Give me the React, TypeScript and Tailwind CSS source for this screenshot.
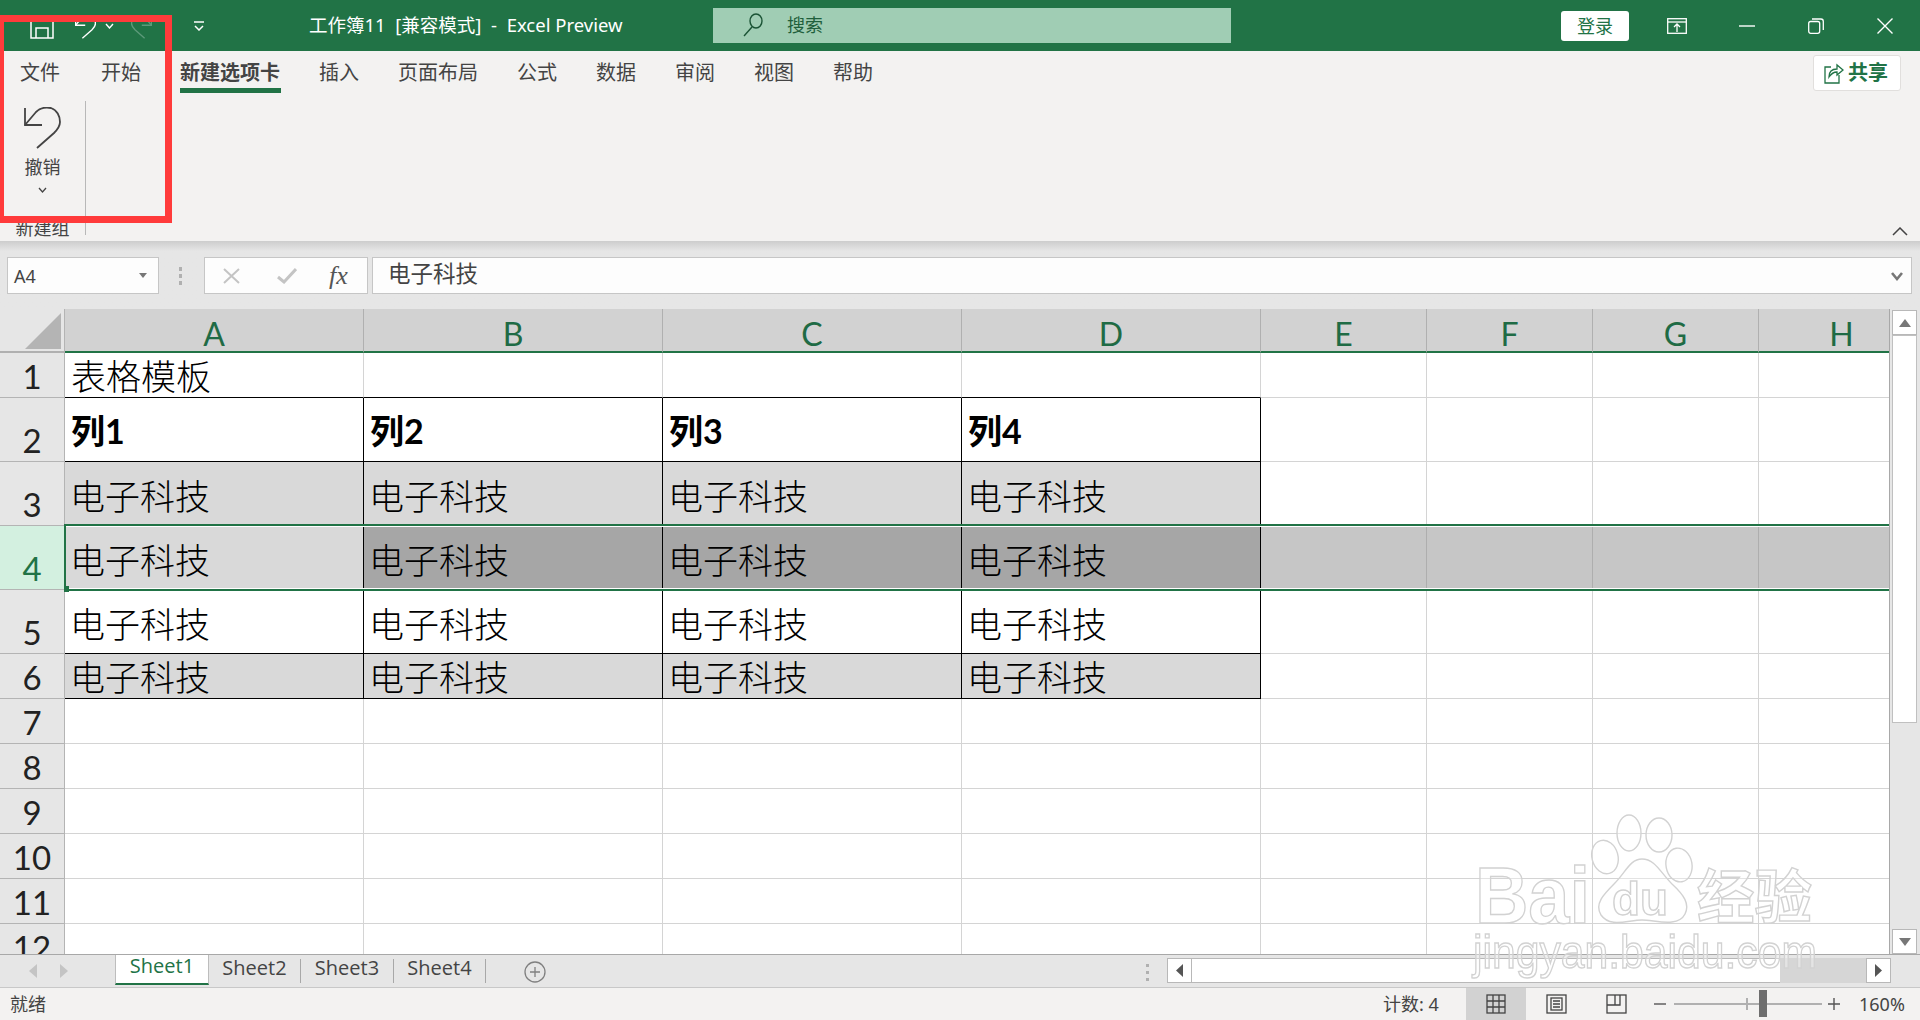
import React from "react"

const COLS = [
  { name: "A", w: "w-[299px]" },
  { name: "B", w: "w-[299px]" },
  { name: "C", w: "w-[299px]" },
  { name: "D", w: "w-[299px]" },
  { name: "E", w: "w-[166px]" },
  { name: "F", w: "w-[166px]" },
  { name: "G", w: "w-[166px]" },
  { name: "H", w: "w-[166px]" },
]

const ROWS = [
  { n: 1, h: "h-[45px]" },
  { n: 2, h: "h-[64px]" },
  { n: 3, h: "h-[64px]" },
  { n: 4, h: "h-[64px]" },
  { n: 5, h: "h-[64px]" },
  { n: 6, h: "h-[45px]" },
  { n: 7, h: "h-[45px]" },
  { n: 8, h: "h-[45px]" },
  { n: 9, h: "h-[45px]" },
  { n: 10, h: "h-[45px]" },
  { n: 11, h: "h-[45px]" },
  { n: 12, h: "h-[45px]" },
]

const TABS = ["插入", "页面布局", "公式", "数据", "审阅", "视图", "帮助"]

function cellBg(row: number, col: number) {
  if (row === 3 && col < 4) return "bg-[#d9d9d9]"
  if (row === 6 && col < 4) return "bg-[#d9d9d9]"
  if (row === 4) {
    if (col === 0) return "bg-[#d9d9d9]"
    if (col < 4) return "bg-[#a6a6a6]"
    return "bg-[#c6c6c6]"
  }
  return "bg-white"
}

function cellBorder(row: number, col: number) {
  const inTable = col < 4 && row >= 2 && row <= 6
  const right = inTable ? "border-r-black" : row === 4 ? "border-r-[#aeaeae]" : "border-r-[#d4d4d4]"
  const bottom = col < 4 && row >= 1 && row <= 6 ? "border-b-black" : "border-b-[#d4d4d4]"
  return `${right} ${bottom}`
}

function cellText(row: number, col: number) {
  if (col > 3) return null
  if (row === 1) {
    return col === 0 ? <span className="text-[35px] leading-none font-light pb-[3px] pl-[1px]">表格模板</span> : null
  }
  if (row === 2) {
    return <span className="text-[34px] leading-none font-bold pb-[13px] pl-[1px]">列{col + 1}</span>
  }
  if (row >= 3 && row <= 6) {
    const pb = row === 6 ? "pb-[3px]" : "pb-[11px]"
    return <span className={`text-[35px] leading-none font-light ${pb}`}>电子科技</span>
  }
  return null
}

function UndoIcon({ color = "#444444" }: { color?: string }) {
  return (
    <svg width="37" height="42" viewBox="0 0 37 42" fill="none" stroke={color} strokeWidth="1.8">
      <path d="M1 1V18H18" />
      <path d="M1 18L12 5C16 1 22 0 27 1C33 3 36 9 36 15C36 20 33 23 30 26L13 41" />
    </svg>
  )
}

function Grid() {
  return (
    <div className="relative w-[1890px] h-[645px] overflow-hidden border-r border-r-[#a8a8a8]">
      {/* column headers */}
      <div className="flex h-[44px]">
        <div className="w-[65px] h-full shrink-0 border-r border-r-[#b4b4b4] border-b-2 border-b-[#b0b0b0] bg-[#e6e6e6] flex items-start pl-[25px] pt-[4px]">
          <svg width="36" height="36" viewBox="0 0 36 36">
            <path d="M36 0V36H0Z" fill="#b4b4b4" />
          </svg>
        </div>
        {COLS.map((c) => (
          <div
            key={c.name}
            className={`${c.w} h-full shrink-0 bg-[#d2d2d2] border-r border-r-[#b0b0b0] border-b-2 border-b-[#217346] flex items-end justify-center text-[32px] leading-none text-[#1f6b45] pb-[1px] [font-family:Lato,sans-serif]`}
          >
            {c.name}
          </div>
        ))}
      </div>

      {/* rows */}
      {ROWS.map((r) => (
        <div key={r.n} className={`flex ${r.h}`}>
          <div
            className={`w-[65px] h-full shrink-0 border-r border-r-[#b4b4b4] border-b border-b-[#b4b4b4] flex items-end justify-center text-[33px] leading-none pb-[4px] [font-family:Lato,sans-serif] ${
              r.n === 4 ? "bg-[#d3f0e0] text-[#217346]" : "bg-[#e6e6e6] text-[#222222]"
            }`}
          >
            {r.n}
          </div>
          {COLS.map((c, i) => (
            <div
              key={c.name}
              className={`${c.w} h-full shrink-0 flex items-end pl-[5px] border-r border-b text-black [font-family:Lato,'Noto_Sans_CJK_SC',sans-serif] ${cellBg(r.n, i)} ${cellBorder(r.n, i)}`}
            >
              {cellText(r.n, i)}
            </div>
          ))}
        </div>
      ))}

      {/* selected row outline */}
      <div className="absolute left-[64px] top-[215px] w-[1826px] h-[67px] border-y-2 border-y-[#217346] pointer-events-none">
        <div className="h-full border-y border-y-white" />
      </div>
      <div className="absolute left-[64px] top-[215px] w-[2px] h-[67px] bg-[#217346]" />
      <div className="absolute left-[64px] top-[277px] w-[5px] h-[6px] bg-[#217346]" />
    </div>
  )
}

function VScroll() {
  return (
    <div className="w-[30px] h-[645px] pl-[2px] pr-[3px] flex flex-col bg-[#e6e6e6]">
      <div className="mt-[1px] h-[25px] bg-white border border-[#b8b8b8] flex items-center justify-center">
        <svg width="12" height="8" viewBox="0 0 12 8"><path d="M6 0L12 8H0Z" fill="#777777" /></svg>
      </div>
      <div className="h-[388px] bg-white border border-[#c0c0c0]" />
      <div className="flex-1" />
      <div className="h-[25px] bg-white border border-[#b8b8b8] flex items-center justify-center">
        <svg width="12" height="8" viewBox="0 0 12 8"><path d="M6 8L12 0H0Z" fill="#777777" /></svg>
      </div>
    </div>
  )
}

function Watermark() {
  const shape = { fill: "#ffffff", fillOpacity: 0.35, stroke: "#d2d2d2", strokeWidth: 1.4 }
  return (
    <svg
      className="absolute left-[1460px] top-[810px] pointer-events-none blur-[0.5px]"
      width="370"
      height="180"
      viewBox="1460 810 370 180"
    >
      <text x="1475" y="923" fontFamily="Liberation Sans" fontWeight="700" fontSize="80" textLength="115" lengthAdjust="spacingAndGlyphs" {...shape}>Bai</text>
      <ellipse cx="1605" cy="857" rx="13" ry="17" transform="rotate(-15 1605 857)" {...shape} />
      <ellipse cx="1629" cy="833" rx="12" ry="18" {...shape} />
      <ellipse cx="1659" cy="835" rx="13" ry="17" {...shape} />
      <ellipse cx="1679" cy="865" rx="13" ry="17" transform="rotate(-10 1679 865)" {...shape} />
      <path d="M1642 859C1655 859 1660 872 1672 884C1684 895 1690 904 1685 914C1678 928 1655 920 1642 920C1628 920 1610 928 1601 915C1594 904 1604 894 1614 884C1626 872 1630 859 1642 859Z" {...shape} />
      <text x="1612" y="915" fontFamily="Liberation Sans" fontWeight="700" fontSize="46" textLength="56" lengthAdjust="spacingAndGlyphs" {...shape}>du</text>
      <text x="1697" y="918" fontFamily="Noto Sans CJK SC" fontWeight="700" fontSize="58" textLength="115" lengthAdjust="spacingAndGlyphs" {...shape}>经验</text>
      <text x="1473" y="968" fontFamily="Liberation Sans" fontSize="46" textLength="344" lengthAdjust="spacingAndGlyphs" {...shape}>jingyan.baidu.com</text>
    </svg>
  )
}

export default function App() {
  return (
    <div className="relative w-[1920px] h-[1020px] overflow-hidden flex flex-col bg-[#e6e6e6] text-[#444444] [font-family:'Noto_Sans','Noto_Sans_CJK_SC',sans-serif]">
      {/* title bar */}
      <div className="h-[51px] shrink-0 bg-[#217346] flex items-center text-white">
        <svg className="ml-[30px]" width="24" height="26" viewBox="0 0 24 26" fill="none" stroke="white" strokeWidth="1.5">
          <path d="M1 4H19L23 8V25H1Z" />
          <path d="M6 25V15H18V25" />
          <path d="M6 4V8H17V4" />
        </svg>
        <svg className="ml-[21px] mt-[3px]" width="21" height="24" viewBox="0 0 37 42" fill="none" stroke="white" strokeWidth="2.4">
          <path d="M1 1V18H18" />
          <path d="M1 18L12 5C16 1 22 0 27 1C33 3 36 9 36 15C36 20 33 23 30 26L13 41" />
        </svg>
        <svg className="ml-[9px]" width="9" height="6" viewBox="0 0 9 6" fill="none" stroke="white" strokeWidth="1.4">
          <path d="M1 1L4.5 5L8 1" />
        </svg>
        <svg className="ml-[17px] mt-[3px]" width="21" height="24" viewBox="0 0 37 42" fill="none" stroke="#5d9a7a" strokeWidth="2.4">
          <path d="M36 1V18H19" />
          <path d="M36 18L25 5C21 1 15 0 10 1C4 3 1 9 1 15C1 20 4 23 7 26L24 41" />
        </svg>
        <svg className="ml-[41px]" width="12" height="10" viewBox="0 0 12 10" fill="none" stroke="white" strokeWidth="1.5">
          <path d="M1 1H11" />
          <path d="M2 5L6 9L10 5" />
        </svg>
        <span className="ml-[104px] w-[404px] text-[18.5px] leading-none whitespace-pre">工作簿11  [兼容模式]  -  Excel Preview</span>
        <div className="w-[518px] h-[35px] -mt-[1px] bg-[#a0cdb4] flex items-center pl-[30px] text-[#1f5f3c]">
          <svg width="20" height="24" viewBox="0 0 20 24" fill="none" stroke="#1a5335" strokeWidth="1.4">
            <ellipse cx="13" cy="8" rx="6" ry="7" />
            <path d="M9 14L1 23" />
          </svg>
          <span className="ml-[24px] text-[18px] leading-none">搜索</span>
        </div>
        <div className="ml-[330px] w-[68px] h-[30px] bg-white rounded-[3px] flex items-center justify-center text-[18px] leading-none text-[#217346]">
          登录
        </div>
        <svg className="ml-[38px]" width="20" height="16" viewBox="0 0 20 16" fill="none" stroke="white" strokeWidth="1.3">
          <rect x="0.7" y="0.7" width="18.6" height="14.6" />
          <path d="M1 4H19" />
          <path d="M10 14V7M7 9L10 6L13 9" />
        </svg>
        <svg className="ml-[52px]" width="16" height="2" viewBox="0 0 16 2"><path d="M0 1H16" stroke="white" strokeWidth="1.4" /></svg>
        <svg className="ml-[53px]" width="16" height="16" viewBox="0 0 16 16" fill="none" stroke="white" strokeWidth="1.3">
          <rect x="0.7" y="3.5" width="11" height="11.8" rx="2" />
          <path d="M4 1H13C14.5 1 15.3 2 15.3 3.5V12" />
        </svg>
        <svg className="ml-[53px]" width="16" height="16" viewBox="0 0 16 16" fill="none" stroke="white" strokeWidth="1.4">
          <path d="M0.5 0.5L15.5 15.5M15.5 0.5L0.5 15.5" />
        </svg>
      </div>

      {/* ribbon */}
      <div className="h-[190px] shrink-0 bg-[#f3f2f1] flex flex-col">
        <div className="h-[42px] shrink-0 flex items-start">
          <div className="flex items-start pt-[9px] pl-[20px] text-[20px] leading-[26px]">
            <span className="w-[81px]">文件</span>
            <span className="w-[79px]">开始</span>
            <span className="w-[101px] pb-[2px] border-b-[5px] border-b-[#217346] font-bold">新建选项卡</span>
            <div className="flex ml-[38px] gap-[39px]">
              {TABS.map((t) => (
                <span key={t}>{t}</span>
              ))}
            </div>
          </div>
          <div className="ml-auto mr-[19px] mt-[4px] w-[88px] h-[36px] bg-white border border-[#e1dfdd] rounded-[3px] flex items-center pl-[10px] text-[#217346]">
            <svg width="20" height="22" viewBox="0 0 20 22" fill="none" stroke="#217346" strokeWidth="1.3">
              <path d="M7 5H1V21H15V13" />
              <path d="M5 15C5 10 8 7 13 7V3L19 8L13 13V10C9 10 7 12 5 15Z" />
            </svg>
            <span className="ml-[4px] text-[20px] leading-none font-bold">共享</span>
          </div>
        </div>
        <div className="flex-1 flex">
          <div className="w-[85px] flex flex-col items-center pt-[14px]">
            <UndoIcon />
            <span className="mt-[6px] text-[18px] leading-[24px]">撤销</span>
            <svg className="mt-[8px]" width="9" height="6" viewBox="0 0 9 6" fill="none" stroke="#444444" strokeWidth="1.3">
              <path d="M1 1L4.5 5L8 1" />
            </svg>
            <span className="mt-[23px] text-[18px] leading-[24px]">新建组</span>
          </div>
          <div className="mt-[8px] mb-[6px] w-[1px] bg-[#b8b8b8]" />
          <svg className="ml-auto mr-[12px] self-end mb-[5px]" width="16" height="9" viewBox="0 0 16 9" fill="none" stroke="#444444" strokeWidth="1.5">
            <path d="M1 8L8 1L15 8" />
          </svg>
        </div>
      </div>

      {/* formula bar */}
      <div className="h-[68px] shrink-0 relative bg-gradient-to-b from-[#cdcdcd] to-[#e6e6e6] to-[10px]">
        <div className="flex items-start pt-[16px] pl-[7px]">
          <div className="w-[152px] h-[37px] bg-[#fdfdfd] border border-[#c6c6c6] flex items-center pl-[6px] pr-[11px] text-[18px] leading-none">
            <span>A4</span>
            <svg className="ml-auto" width="8" height="5" viewBox="0 0 8 5"><path d="M0 0H8L4 5Z" fill="#777777" /></svg>
          </div>
          <div className="ml-[19px] w-[4px] h-[37px] flex flex-col items-center justify-center gap-[3px]">
            <div className="w-[3px] h-[4px] bg-[#b0b0b0]" />
            <div className="w-[3px] h-[4px] bg-[#b0b0b0]" />
            <div className="w-[3px] h-[4px] bg-[#b0b0b0]" />
          </div>
          <div className="ml-[22px] w-[164px] h-[37px] bg-[#fdfdfd] border border-[#c6c6c6] flex items-center pl-[18px]">
            <svg width="17" height="16" viewBox="0 0 17 16" fill="none" stroke="#c4c4c4" strokeWidth="2">
              <path d="M1 1L16 15M16 1L1 15" />
            </svg>
            <svg className="ml-[37px]" width="20" height="16" viewBox="0 0 20 16" fill="none" stroke="#c4c4c4" strokeWidth="3">
              <path d="M1 9L7 14L19 1" />
            </svg>
            <span className="ml-[32px] text-[26px] leading-none italic [font-family:'Liberation_Serif',serif] text-[#555555]">fx</span>
          </div>
          <div className="ml-[4px] w-[1540px] h-[37px] bg-[#fdfdfd] border border-[#c6c6c6] flex items-center pl-[15px] pr-[8px] text-[22.5px] leading-none">
            <span className="-mt-[2px]">电子科技</span>
            <svg className="ml-auto" width="12" height="10" viewBox="0 0 12 10" fill="none" stroke="#777777" strokeWidth="2.6">
              <path d="M1 2L6 8L11 2" />
            </svg>
          </div>
        </div>
      </div>

      {/* sheet */}
      <div className="flex h-[645px] shrink-0">
        <Grid />
        <VScroll />
      </div>

      {/* tab strip */}
      <div className="h-[33px] shrink-0 border-t border-t-[#a8a8a8] bg-[#e6e6e6] flex items-start text-[20px] leading-none [font-family:'Open_Sans',sans-serif]">
        <div className="w-[115px] h-full flex items-center pl-[29px] gap-[23px]">
          <svg width="8" height="14" viewBox="0 0 8 14"><path d="M8 0V14L0 7Z" fill="#c4c4c4" /></svg>
          <svg width="8" height="14" viewBox="0 0 8 14"><path d="M0 0V14L8 7Z" fill="#c4c4c4" /></svg>
        </div>
        <div className="w-[94px] h-[30px] pb-[6px] bg-white border-x border-x-[#bdbdbd] border-b-[2px] border-b-[#217346] flex items-center justify-center text-[#217346]">
          Sheet1
        </div>
        <div className="w-[92px] mt-[4px] h-[24px] pb-[7px] border-r border-r-[#a8a8a8] flex items-center justify-center">Sheet2</div>
        <div className="w-[93px] mt-[4px] h-[24px] pb-[7px] border-r border-r-[#a8a8a8] flex items-center justify-center">Sheet3</div>
        <div className="w-[92px] mt-[4px] h-[24px] pb-[7px] border-r border-r-[#a8a8a8] flex items-center justify-center">Sheet4</div>
        <svg className="ml-[38px] mt-[6px]" width="22" height="22" viewBox="0 0 22 22" fill="none" stroke="#808080" strokeWidth="1.3">
          <circle cx="11" cy="11" r="10" />
          <path d="M11 6V16M6 11H16" />
        </svg>
        <div className="ml-[600px] mt-[9px] w-[3px] h-[17px] flex flex-col justify-between">
          <div className="w-[3px] h-[3px] bg-[#b0b0b0]" />
          <div className="w-[3px] h-[3px] bg-[#b0b0b0]" />
          <div className="w-[3px] h-[3px] bg-[#b0b0b0]" />
        </div>
        <div className="ml-[18px] mt-[3px] w-[724px] h-[25px] flex bg-[#d6d6d6]">
          <div className="w-[25px] h-full bg-white border border-[#b8b8b8] flex items-center justify-center">
            <svg width="7" height="13" viewBox="0 0 7 13"><path d="M7 0V13L0 6.5Z" fill="#555555" /></svg>
          </div>
          <div className="w-[588px] h-full bg-white border-y border-y-[#b8b8b8]" />
          <div className="flex-1" />
          <div className="w-[25px] h-full bg-white border border-[#b8b8b8] flex items-center justify-center">
            <svg width="7" height="13" viewBox="0 0 7 13"><path d="M0 0V13L7 6.5Z" fill="#555555" /></svg>
          </div>
        </div>
      </div>

      {/* status bar */}
      <div className="flex-1 bg-[#f3f2f1] border-t border-t-[#c8c8c8] flex items-center text-[18px] leading-none">
        <span className="ml-[10px]">就绪</span>
        <span className="ml-[1337px] w-[83px]">计数: 4</span>
        <div className="w-[60px] h-full bg-[#d2d2d2] flex items-center justify-center">
          <svg width="20" height="20" viewBox="0 0 20 20" fill="none" stroke="#444444" strokeWidth="1.3">
            <rect x="1" y="1" width="18" height="18" />
            <path d="M7 1V19M13 1V19M1 7H19M1 13H19" />
          </svg>
        </div>
        <svg className="ml-[20px]" width="21" height="20" viewBox="0 0 21 20" fill="none" stroke="#444444" strokeWidth="1.3">
          <rect x="1" y="1" width="19" height="18" />
          <rect x="5" y="4" width="11" height="12" />
          <path d="M7 7H14M7 10H14M7 13H14" />
        </svg>
        <svg className="ml-[39px]" width="21" height="20" viewBox="0 0 21 20" fill="none" stroke="#444444" strokeWidth="1.3">
          <rect x="1" y="1" width="19" height="18" />
          <path d="M9 1V11H1M9 11H14V1" />
        </svg>
        <svg className="ml-[27px]" width="12" height="2" viewBox="0 0 12 2"><path d="M0 1H12" stroke="#555555" strokeWidth="1.4" /></svg>
        <div className="ml-[8px] relative w-[148px] h-[2px] bg-[#b0b0b0]">
          <div className="absolute left-[72px] top-[-5px] w-[2px] h-[12px] bg-[#b0b0b0]" />
          <div className="absolute left-[85px] top-[-13px] w-[8px] h-[27px] bg-[#6e6e6e]" />
        </div>
        <svg className="ml-[6px]" width="12" height="12" viewBox="0 0 12 12"><path d="M0 6H12M6 0V12" stroke="#555555" strokeWidth="1.4" /></svg>
        <span className="ml-[19px]">160%</span>
      </div>

      {/* red annotation box */}
      <div className="absolute left-[-3px] top-[15px] w-[175px] h-[208px] border-[7px] border-[#ff3b3b] pointer-events-none" />

      <Watermark />
    </div>
  )
}
